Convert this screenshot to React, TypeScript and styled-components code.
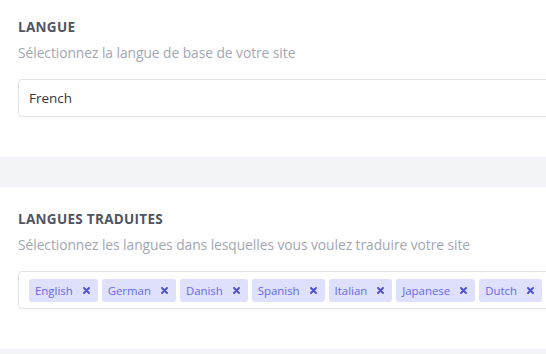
import React from "react";
import styled, { createGlobalStyle } from "styled-components";

const Global = createGlobalStyle`
  html, body { margin: 0; padding: 0; background: #ffffff; overflow: hidden; }
  body { font-family: "Open Sans", "Noto Sans", sans-serif; }
`;

const Page = styled.div`
  width: 620px;
  height: 354px;
  overflow: hidden;
  display: flex;
  flex-direction: column;
`;

const Section = styled.section<{ $top: number }>`
  padding: ${(p) => p.$top}px 0 40px 18px;
  display: flex;
  flex-direction: column;
  flex: none;
`;

const Divider = styled.div`
  height: 30px;
  flex: none;
  background: #f3f4f8;
`;

const Heading = styled.h2`
  margin: 0;
  font-size: 13.5px;
  line-height: 18px;
  font-weight: 700;
  letter-spacing: 0.3px;
  color: #4f5562;
  text-transform: uppercase;
`;

const Subtitle = styled.p`
  margin: 7px 0 0;
  font-size: 13.8px;
  line-height: 20px;
  letter-spacing: -0.05px;
  color: #a2a7b2;
`;

const Field = styled.div`
  margin-top: 16px;
  height: 38px;
  box-sizing: border-box;
  border: 1px solid #e1e2e6;
  border-radius: 4px;
  display: flex;
  align-items: center;
  padding: 0 10px;
  font-size: 13.5px;
  color: #34363d;
`;

const TagField = styled(Field)`
  gap: 4px;
`;

const Tag = styled.span`
  display: inline-flex;
  align-items: center;
  height: 23px;
  padding: 0 8px 0 6px;
  gap: 10px;
  border-radius: 3px;
  background: #dfe1fc;
  color: #6468ee;
  font-size: 11.4px;
`;

const Remove = styled.svg`
  width: 7px;
  height: 7px;
  flex: none;
`;

const langs = ["English", "German", "Danish", "Spanish", "Italian", "Japanese", "Dutch"];

export default function App() {
  return (
    <>
      <Global />
      <Page>
        <Section $top={18}>
          <Heading>Langue</Heading>
          <Subtitle>Sélectionnez la langue de base de votre site</Subtitle>
          <Field>French</Field>
        </Section>
        <Divider />
        <Section $top={23}>
          <Heading>Langues traduites</Heading>
          <Subtitle>Sélectionnez les langues dans lesquelles vous voulez traduire votre site</Subtitle>
          <TagField>
            {langs.map((l) => (
              <Tag key={l}>
                {l}
                <Remove viewBox="0 0 7 7">
                  <path d="M1 1 L6 6 M6 1 L1 6" stroke="#4b4fd6" strokeWidth="1.9" strokeLinecap="round" />
                </Remove>
              </Tag>
            ))}
          </TagField>
        </Section>
        <Divider />
      </Page>
    </>
  );
}
